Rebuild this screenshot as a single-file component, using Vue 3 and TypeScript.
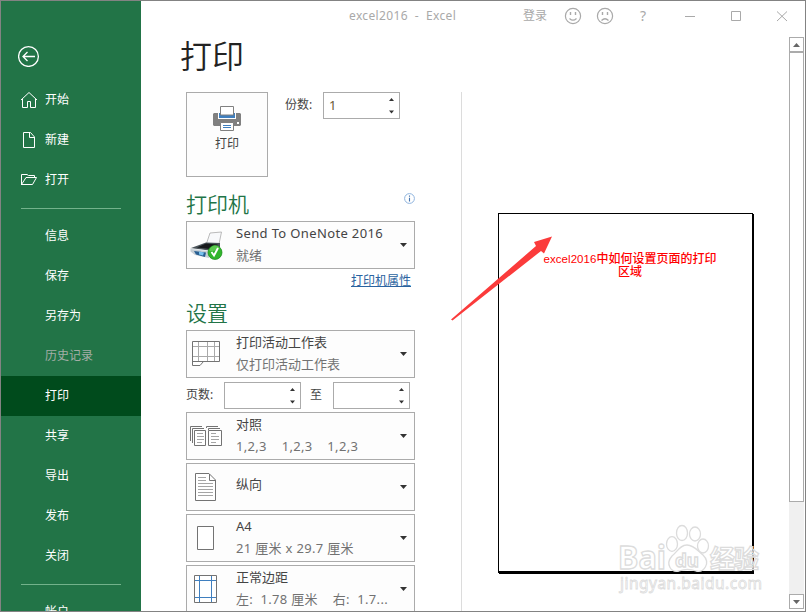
<script setup lang="ts">
import { ref } from 'vue'

interface NavItem {
  label: string
  icon?: 'home' | 'file' | 'folder'
  disabled?: boolean
}

interface Setting {
  icon: 'collate' | 'portrait' | 'paper' | 'margins'
  title: string
  detail?: string
  spaced?: boolean
}

const primary: NavItem[] = [
  { label: '开始', icon: 'home' },
  { label: '新建', icon: 'file' },
  { label: '打开', icon: 'folder' },
]
const secondary: NavItem[] = [
  { label: '信息' },
  { label: '保存' },
  { label: '另存为' },
  { label: '历史记录', disabled: true },
  { label: '打印' },
  { label: '共享' },
  { label: '导出' },
  { label: '发布' },
  { label: '关闭' },
]
const settings: Setting[] = [
  { icon: 'collate', title: '对照', detail: '1,2,3    1,2,3    1,2,3', spaced: true },
  { icon: 'portrait', title: '纵向' },
  { icon: 'paper', title: 'A4', detail: '21 厘米 x 29.7 厘米' },
  { icon: 'margins', title: '正常边距', detail: '左:  1.78 厘米    右:  1.7...' },
]
const active = ref('打印')
const copies = ref('1')
</script>

<template>
  <div class="window">
    <nav class="sidebar">
      <button class="back" aria-label="返回">
        <svg width="22" height="22" viewBox="0 0 22 22" fill="none" stroke="#fff" stroke-width="1.3">
          <circle cx="10.500" cy="11.500" r="9.900" />
          <path d="M17 11.500H5M9.500 7L5 11.500L9.500 16" />
        </svg>
      </button>
      <a v-for="item in primary" :key="item.label" class="nav">
        <svg v-if="item.icon === 'home'" width="18" height="18" viewBox="0 0 18 18" fill="none" stroke="#fff" stroke-width="1">
          <path d="M1 9L9 1.500L17 9M2.500 8V16.500H7.500V10.500H10.500V16.500H15.500V8" />
        </svg>
        <svg v-else-if="item.icon === 'file'" width="18" height="18" viewBox="0 0 18 18" fill="none" stroke="#fff" stroke-width="1">
          <path d="M3.500 1.500H10.500L14.500 6V16.500H3.500ZM9.500 1.500V6.500H14.500" />
        </svg>
        <svg v-else width="18" height="18" viewBox="0 0 18 18" fill="none" stroke="#fff" stroke-width="1">
          <path d="M1.500 14V3.500H7L8.500 4.500H14.500V6.500M1.500 13.500L6 6.500H16.500L12.500 13.500H1.500" />
        </svg>
        <span>{{ item.label }}</span>
      </a>
      <hr class="rule" />
      <a
        v-for="item in secondary"
        :key="item.label"
        class="nav text-only"
        :class="{ active: item.label === active, disabled: item.disabled }"
        @click="!item.disabled && (active = item.label)"
      >{{ item.label }}</a>
      <hr class="rule" />
      <a class="nav text-only">帐户</a>
    </nav>

    <div class="content">
      <header class="titlebar">
        <span class="doc">excel2016&nbsp; -&nbsp; Excel</span>
        <span class="login">登录</span>
        <svg class="controls" width="230" height="30" viewBox="0 0 230 30" fill="none" stroke="#a9a9a9">
          <g stroke-width="1.2">
            <circle cx="15" cy="15" r="7.600" />
            <path d="M11.500 17.500Q15 21 18.500 17.500" />
            <circle cx="47" cy="15" r="7.600" />
            <path d="M43.500 19.500Q47 16 50.500 19.500" />
          </g>
          <path d="M12.500 11V14M17.500 11V14M44.500 11V14M49.500 11V14" stroke-width="1.400" />
          <path d="M127 15.500H137M173.500 10.500H182.500V19.500H173.500ZM219 10.500L229 20M229 10.500L219 20" />
        </svg>
        <span class="help">?</span>
      </header>

      <div class="body">
        <section class="options">
          <h1>打印</h1>
          <div class="print-row">
            <button class="print-btn">
              <svg width="28" height="26" viewBox="0 0 28 26">
                <path d="M1 7H27L28 8V19L27 20H1L0 19V8Z" fill="#808080" />
                <path d="M5 7H23V13H5Z" fill="#fff" />
                <path d="M6 7H22V12H6Z" fill="#3f7fbf" />
                <path d="M7.500 .500H20.500V9H7.500Z" fill="#fff" stroke="#808080" />
                <path d="M7.500 16.500H20.500V24.500H7.500Z" fill="#fff" stroke="#808080" />
                <path d="M10 19.500H18M10 21.500H18" stroke="#3f7fbf" />
                <path d="M24 16H26V18H24Z" fill="#fff" />
              </svg>
              <span>打印</span>
            </button>
            <label class="copies-label">份数:</label>
            <div class="spin">
              <span>{{ copies }}</span>
              <svg width="5" height="16" viewBox="0 0 5 16" fill="#333"><path d="M0 3L2.500 0L5 3ZM0 12.500H5L2.500 15.500Z" /></svg>
            </div>
          </div>

          <div class="heading first">
            <h2>打印机</h2>
            <svg width="11" height="11" viewBox="0 0 11 11" fill="none"><circle cx="5.500" cy="5.500" r="4.900" stroke="#8fb4de" /><path d="M5.500 2.500V3.700M5.500 4.700V8.500" stroke="#4675ae" stroke-width="1.100" /></svg>
          </div>
          <div class="combo">
            <svg class="icon" width="34" height="32" viewBox="0 0 34 32">
              <path d="M16 16L20 4L31.500 3L29 15Z" fill="#f8f9fb" stroke="#aaa" stroke-width=".8" />
              <path d="M1 19L16 13.500L30 14V21L21 26L1 21Z" fill="#4a5359" />
              <path d="M7 18.500L16 14.500L28 15.500L20 20Z" fill="#17191c" />
              <path d="M.500 19.500L19 21.500V29L5 26L.500 22.500Z" fill="#c5ced5" />
              <path d="M.500 19.500L19 22L29 17.500" fill="none" stroke="#e6eaed" />
              <path d="M4 22L16 23.500L15 28L6 25.500Z" fill="#285e91" />
              <path d="M9 22.500L14 23.500L13 26.500L9 25.500Z" fill="#78c3ee" />
              <circle cx="25" cy="23.500" r="7" fill="#31b52c" stroke="#158b17" stroke-width=".7" />
              <path d="M19.500 20Q24.500 13 30 19Q25.500 23 19.500 22Z" fill="#78d969" opacity=".6" />
              <path d="M21.500 23L24 26.500L28 19" fill="none" stroke="#fff" stroke-width="1.900" />
            </svg>
            <div class="lines"><b class="device">Send To OneNote 2016</b><i>就绪</i></div>
            <span class="caret"></span>
          </div>
          <a class="props">打印机属性</a>

          <div class="heading second"><h2>设置</h2></div>
          <div class="combo">
            <svg class="icon" width="34" height="32" viewBox="0 0 34 32" fill="none">
              <path d="M2.500 3.500H29.500V23.500H13.500L10 27.500H2.500Z" fill="#fff" stroke="#737373" />
              <path d="M8.500 4V23M17.500 4V23M24.500 4V23M3 8.500H29M3 18.500H29" stroke="#aaa" />
              <path d="M3 23.500H14" stroke="#737373" />
            </svg>
            <div class="lines"><b>打印活动工作表</b><i>仅打印活动工作表</i></div>
            <span class="caret"></span>
          </div>
          <div class="pages">
            <label>页数:</label>
            <div class="spin"><span></span><svg width="5" height="16" viewBox="0 0 5 16" fill="#333"><path d="M0 3L2.500 0L5 3ZM0 12.500H5L2.500 15.500Z" /></svg></div>
            <span class="to">至</span>
            <div class="spin"><span></span><svg width="5" height="16" viewBox="0 0 5 16" fill="#333"><path d="M0 3L2.500 0L5 3ZM0 12.500H5L2.500 15.500Z" /></svg></div>
          </div>
          <div class="stack">
            <div v-for="s in settings" :key="s.title" class="combo">
              <svg v-if="s.icon === 'collate'" class="icon" width="34" height="32" viewBox="0 0 34 32" fill="none" stroke="#737373">
                <path d="M.500 21V6.500H12M2.500 23V8.500H14M16.500 8V6.500H28M18.500 10V8.500H30" />
                <path d="M4.500 10.500H15.500V25.500H4.500ZM18.500 10.500H31.500V25.500H18.500Z" fill="#fff" />
                <path d="M7 13.500H13M7 16.500H14M7 19.500H14M7 22.500H12M21 13.500H26M21 16.500H29M21 19.500H29M21 22.500H26" stroke="#a5a5a5" />
              </svg>
              <svg v-else-if="s.icon === 'portrait'" class="icon" width="34" height="32" viewBox="0 0 34 32" fill="none" stroke="#737373">
                <path d="M5.500 2.500H19L25.500 9V29.500H5.500Z" fill="#fff" />
                <path d="M19.500 3V9.500H25" />
                <path d="M8 6.500H16M8 9.500H16M8 12.500H23M8 15.500H23M8 18.500H23M8 21.500H23M8 24.500H23" stroke="#a5a5a5" />
              </svg>
              <svg v-else-if="s.icon === 'paper'" class="icon" width="34" height="32" viewBox="0 0 34 32">
                <path d="M7.500 4.500H23.500V27.500H7.500Z" fill="#fff" stroke="#737373" />
              </svg>
              <svg v-else class="icon" width="34" height="32" viewBox="0 0 34 32" fill="none">
                <path d="M4.500 2.500H26.500V29.500H4.500Z" fill="#fff" stroke="#737373" />
                <path d="M9.500 3V29M21.500 3V29M5 7.500H26M5 24.500H26" stroke="#3f7fbf" />
              </svg>
              <div class="lines" :class="{ single: !s.detail, spaced: s.spaced }"><b>{{ s.title }}</b><i v-if="s.detail" class="measure">{{ s.detail }}</i></div>
              <span class="caret"></span>
            </div>
          </div>
        </section>

        <section class="preview">
          <div class="page"><p><span class="latin">excel2016</span>中如何设置页面的打印<br />区域</p></div>
          <svg class="arrow" width="102" height="86" viewBox="0 0 102 86">
            <path d="M0 84.500L85 11L83 7L101 1.500L93 18.500L90 16L1.500 85.500Z" fill="#fb3b3b" />
          </svg>
          <svg class="watermark" width="150" height="76" viewBox="0 0 150 76">
            <g fill="#fff" fill-opacity=".7" stroke="#dcdcdc" stroke-width="1.300">
              <text x="2" y="50" font-size="32" font-weight="bold" textLength="48" lengthAdjust="spacingAndGlyphs">Bai</text>
              <path d="M71 26C78 26 82 32 87 36C95 44 88 54 80 52C75 50 68 50 63 52C55 54 49 45 56 37C62 32 64 26 71 26Z" />
              <ellipse cx="56" cy="25" rx="5.500" ry="7.300" />
              <ellipse cx="66" cy="14" rx="5.500" ry="7.500" />
              <ellipse cx="79" cy="15" rx="5.500" ry="7" />
              <ellipse cx="87" cy="27" rx="5.500" ry="7" />
              <text x="59" y="48" font-size="18" font-weight="bold" textLength="24" lengthAdjust="spacingAndGlyphs">du</text>
              <text x="94" y="49" font-size="25" font-weight="bold" textLength="49">经验</text>
              <text x="4" y="70" font-size="15.500" stroke-width=".8" textLength="142">jingyan.baidu.com</text>
            </g>
          </svg>
        </section>

        <div class="scrollbar">
          <div class="sb-btn"><svg width="7" height="4" viewBox="0 0 7 4"><path d="M0 4L3.500 0L7 4Z" fill="#666" /></svg></div>
          <div class="thumb"></div>
          <div class="track"></div>
          <div class="sb-btn"><svg width="7" height="4" viewBox="0 0 7 4"><path d="M0 0H7L3.500 4Z" fill="#666" /></svg></div>
        </div>
      </div>
    </div>
  </div>
</template>

<style>
body {
  overflow: hidden;
}
</style>

<style scoped>
.window {
  box-sizing: border-box;
  width: 806px;
  height: 612px;
  border: 1px solid #838383;
  background: #fff;
  display: flex;
  overflow: hidden;
  font-family: 'Noto Sans', 'Noto Sans CJK SC', sans-serif;
  font-size: 12px;
  font-weight: 400;
  color: #444;
}
.window * {
  box-sizing: border-box;
}
svg {
  display: block;
  flex: none;
}
button {
  font: inherit;
  color: inherit;
  border: 0;
  padding: 0;
  background: none;
}
.sidebar {
  width: 140px;
  flex: none;
  background: #227447;
  color: #fff;
}
.back {
  display: block;
  margin: 44px 0 13px 17px;
}
.nav {
  display: flex;
  align-items: center;
  gap: 7px;
  height: 40px;
  padding: 0 0 3px 19px;
}
.nav svg {
  margin-top: 3px;
}
.text-only {
  padding-left: 44px;
}
.active {
  background: #004b1c;
}
.disabled {
  color: #a4aea7;
}
.rule {
  width: 100px;
  height: 1px;
  border: 0;
  margin: 8px 0 7px 20px;
  background: #73b28b;
}
.content {
  flex: 1;
  min-width: 0;
  display: flex;
  flex-direction: column;
}
.titlebar {
  height: 36px;
  flex: none;
  display: flex;
  align-items: flex-start;
  color: #a9a9a9;
  line-height: 30px;
  position: relative;
}
.doc {
  width: 173px;
  padding-left: 208px;
  box-sizing: content-box;
  white-space: nowrap;
  letter-spacing: 0.35px;
}
.login {
  width: 36px;
  padding-left: 1px;
}
.help {
  position: absolute;
  left: 499px;
  top: 0;
  font-size: 14px;
}
.body {
  flex: 1;
  min-height: 0;
  display: flex;
}
.options {
  width: 320px;
  flex: none;
  padding-left: 45px;
}
h1 {
  margin: -1px 0 16px -6px;
  font-size: 32px;
  line-height: 40px;
  font-weight: 350;
  color: #222;
}
.print-row {
  display: flex;
  align-items: flex-start;
}
.print-btn {
  width: 82px;
  height: 85px;
  border: 1px solid #ababab;
  background: #fdfdfd;
  display: flex;
  flex-direction: column;
  align-items: center;
  padding-top: 13px;
  gap: 2px;
}
.print-btn span {
  line-height: 20px;
}
.copies-label {
  width: 55px;
  padding-left: 17px;
  line-height: 25px;
  white-space: nowrap;
}
.spin {
  width: 77px;
  height: 27px;
  border: 1px solid #ababab;
  background: #fff;
  display: flex;
  justify-content: space-between;
  align-items: center;
  padding: 0 5px;
}
.spin span {
  font-size: 13px;
  line-height: 20px;
  padding-bottom: 1px;
  color: #6b5a35;
}
.heading {
  display: flex;
  justify-content: space-between;
  width: 229px;
}
h2 {
  margin: 0;
  font-size: 21px;
  line-height: 28px;
  font-weight: 350;
  color: #227447;
}
.heading.first {
  height: 31px;
  margin-top: 13px;
}
.heading.first svg {
  margin-top: 3px;
}
.heading.second {
  height: 31px;
}
.combo {
  width: 229px;
  height: 48px;
  border: 1px solid #ababab;
  background: #fdfdfd;
  display: flex;
  align-items: center;
  flex: none;
}
.icon {
  width: 34px;
  margin: 0 12px 0 3px;
}
.lines {
  flex: 1;
  min-width: 0;
  display: flex;
  flex-direction: column;
  font-size: 13px;
  line-height: 22px;
  height: 46px;
  white-space: pre;
}
.lines b {
  font-weight: 400;
}
.lines i {
  font-style: normal;
  color: #727272;
}
.lines .measure {
  letter-spacing: 0.32px;
}
.spaced .measure {
  word-spacing: 0;
}
.single {
  justify-content: center;
  padding-bottom: 6px;
}
.lines .device {
  font-size: 13px;
  letter-spacing: 0.36px;
}
.caret {
  width: 7px;
  height: 4px;
  margin: 0 7px;
  background: #333;
  clip-path: polygon(0 0, 100% 0, 50% 100%);
}
.props {
  display: block;
  width: 225px;
  height: 30px;
  text-align: right;
  line-height: 24px;
  color: #2b63a0;
  text-decoration: underline;
}
.pages {
  display: flex;
  margin: 4px 0 3px;
  line-height: 25px;
}
.pages label {
  width: 38px;
}
.to {
  width: 32px;
  padding-left: 9px;
}
.stack {
  display: flex;
  flex-direction: column;
  gap: 3px;
}
.preview {
  position: relative;
  width: 328px;
  flex: none;
  margin-top: 55px;
  padding: 121px 0 0 36px;
  border-left: 1px solid #dcdcdc;
}
.page {
  width: 255px;
  height: 360px;
  border: 1px solid #000;
  border-bottom-width: 2px;
  box-shadow: 1px 1px 0 #000;
  padding: 39px 0 0 9px;
}
.page p {
  margin: 0;
  text-align: center;
  font: 12px/13px 'Liberation Sans', 'Noto Sans CJK SC', sans-serif;
  font-weight: 500;
  color: #f00;
}
.latin {
  font-size: 11.5px;
  letter-spacing: 0.05px;
}
.arrow {
  position: absolute;
  left: -11px;
  top: 143px;
}
.watermark {
  position: absolute;
  left: 154px;
  top: 427px;
}
.scrollbar {
  width: 15px;
  display: flex;
  flex-direction: column;
  padding-bottom: 2px;
}
.sb-btn {
  height: 15px;
  flex: none;
  border: 1px solid #ababab;
  background: #fff;
  display: grid;
  place-items: center;
}
.thumb {
  height: 450px;
  flex: none;
  border: 1px solid #ababab;
  background: #fff;
}
.track {
  flex: 1;
  background: #f0f0f0;
}
</style>
